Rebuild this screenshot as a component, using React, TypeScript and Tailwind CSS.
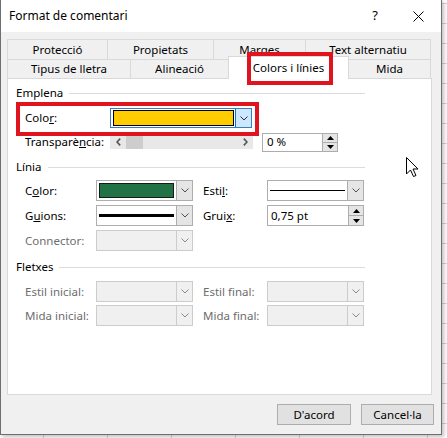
import React from "react";

const font = { fontFamily: '"Noto Sans", "Segoe UI", Arial, sans-serif' };

function Chevron({ color = "#404040" }: { color?: string }) {
  return (
    <svg width="8" height="5" viewBox="0 0 8 5">
      <polyline points="0.5,0.5 4,4 7.5,0.5" fill="none" stroke={color} strokeWidth="1" />
    </svg>
  );
}

function Spinner() {
  return (
    <div className="w-[15px] h-full flex flex-col border-l border-[#adadad] bg-[#e5e5e5]">
      <div className="flex-1 flex items-center justify-center border-b border-[#adadad]">
        <svg width="7" height="4" viewBox="0 0 7 4">
          <polygon points="0,4 3.5,0 7,4" fill="#000" />
        </svg>
      </div>
      <div className="flex-1 flex items-center justify-center">
        <svg width="7" height="4" viewBox="0 0 7 4">
          <polygon points="0,0 3.5,4 7,0" fill="#000" />
        </svg>
      </div>
    </div>
  );
}

function Dropdown({ children, disabled = false }: { children?: React.ReactNode; disabled?: boolean }) {
  return (
    <div
      className={
        "w-[97px] h-[21px] flex border " +
        (disabled ? "border-[#cccccc] bg-[#f0f0f0]" : "border-[#adadad] bg-white")
      }
    >
      <div className="flex-1 p-[2px] flex items-center">{children}</div>
      <div
        className={
          "w-[16px] flex items-center justify-center border-l " +
          (disabled ? "border-[#cccccc] bg-[#f0f0f0]" : "border-[#adadad] bg-[#e5e5e5]")
        }
      >
        <Chevron color={disabled ? "#8a8a8a" : "#505050"} />
      </div>
    </div>
  );
}

function SectionHeader({ title }: { title: string }) {
  return (
    <div className="ml-[8px] w-[349px] h-[16px] flex items-center gap-[6px]">
      <span className="leading-[16px]">{title}</span>
      <div className="flex-1 h-px bg-[#dcdcdc]" />
    </div>
  );
}

function Label({ children, w, disabled = false }: { children: React.ReactNode; w: string; disabled?: boolean }) {
  return (
    <div className={w + " leading-[16px] " + (disabled ? "text-[#6d6d6d]" : "text-black")}>{children}</div>
  );
}

function Tab({ label, w, last = false }: { label: string; w: string; last?: boolean }) {
  return (
    <div
      className={
        w +
        " h-full flex items-center justify-center border-t border-l border-[#d9d9d9] " +
        (last ? "border-r" : "")
      }
    >
      {label}
    </div>
  );
}

export default function App() {
  return (
    <div
      className="relative w-[447px] h-[438px] overflow-hidden bg-white text-[11.5px] text-black [background-image:linear-gradient(to_right,#d4d4d4_1px,transparent_1px),linear-gradient(to_bottom,#d4d4d4_1px,transparent_1px)] [background-size:64px_20px] [background-position:43px_3px]"
      style={font}
    >
      {/* dialog window */}
      <div className="w-[442px] h-[435px] flex flex-col bg-[#f0f0f0] border-l border-r border-b border-[#6f6f6f] shadow-[2px_2px_4px_rgba(0,0,0,0.25)]">
        {/* title bar */}
        <div className="h-[32px] bg-white flex items-center pl-[8px]">
          <span className="text-[12px]">Format de comentari</span>
          <div className="flex-1" />
          <span className="text-[13px] mr-[35px]">?</span>
          <svg width="11" height="11" viewBox="0 0 11 11" className="mr-[17px]">
            <line x1="0.5" y1="0.5" x2="10.5" y2="10.5" stroke="#000" strokeWidth="1" />
            <line x1="10.5" y1="0.5" x2="0.5" y2="10.5" stroke="#000" strokeWidth="1" />
          </svg>
        </div>

        {/* body */}
        <div className="flex-1 flex flex-col pl-[6px] pr-[7px] pt-[7px]">
          {/* tabs, back row */}
          <div className="h-[20px] flex w-[424px]">
            <Tab label="Protecció" w="w-[100px]" />
            <Tab label="Propietats" w="w-[106px]" />
            <Tab label="Marges" w="w-[92px]" />
            <Tab label="Text alternatiu" w="w-[126px]" last />
          </div>
          {/* tabs, front row */}
          <div className="h-[19px] flex w-[424px] relative z-10">
            <Tab label="Tipus de lletra" w="w-[123px]" />
            <Tab label="Alineació" w="w-[98px]" />
            <div className="w-[121px] h-[23px] -mt-[3px] flex items-center justify-center bg-white border-t border-l border-r border-[#d9d9d9]">
              Colors i línies
            </div>
            <div className="w-[82px] h-full flex items-center justify-center border-t border-r border-[#d9d9d9]">
              Mida
            </div>
          </div>

          {/* tab page */}
          <div className="w-[425px] h-[317px] bg-white border border-[#d9d9d9] flex flex-col pt-[6px]">
            <SectionHeader title="Emplena" />

            <div className="ml-[17px] mt-[7px] h-[20px] flex items-center">
              <Label w="w-[85px]">
                Colo<span className="underline">r</span>:
              </Label>
              <div className="w-[142px] h-[20px] flex border border-[#3d7ab8]">
                <div className="flex-1 p-[1px] pl-[2px] flex">
                  <div className="flex-1 border border-black bg-[#ffcc00]" />
                </div>
                <div className="w-[16px] flex items-center justify-center bg-[#cce8ff] border-l border-[#0078d7]">
                  <Chevron color="#303030" />
                </div>
              </div>
            </div>

            <div className="ml-[17px] mt-[4px] h-[20px] flex items-center">
              <Label w="w-[85px]">
                Transparè<span className="underline">n</span>cia:
              </Label>
              <div className="w-[143px] h-[13px] bg-[#e8e8e8] flex items-center">
                <div className="w-[16px] flex items-center justify-center">
                  <svg width="5" height="8" viewBox="0 0 5 8">
                    <polyline points="4.2,0.6 1,4 4.2,7.4" fill="none" stroke="#555" strokeWidth="1.6" />
                  </svg>
                </div>
                <div className="w-[17px] h-full bg-[#cdcdcd]" />
                <div className="flex-1" />
                <div className="w-[16px] flex items-center justify-center">
                  <svg width="5" height="8" viewBox="0 0 5 8">
                    <polyline points="0.8,0.6 4,4 0.8,7.4" fill="none" stroke="#555" strokeWidth="1.6" />
                  </svg>
                </div>
              </div>
              <div className="ml-[9px] w-[76px] h-[19px] flex border border-[#adadad] bg-white">
                <div className="flex-1 pl-[4px] flex items-center">0 %</div>
                <Spinner />
              </div>
            </div>

            <div className="mt-[7px]">
              <SectionHeader title="Línia" />
            </div>

            <div className="ml-[17px] mt-[5px] h-[21px] flex items-center">
              <Label w="w-[71px]">
                C<span className="underline">o</span>lor:
              </Label>
              <Dropdown>
                <div className="w-full h-full border border-[#1a1a1a] bg-[#217346]" />
              </Dropdown>
              <Label w="ml-[10px] w-[64px]">
                Esti<span className="underline">l</span>:
              </Label>
              <Dropdown>
                <div className="w-full h-px bg-black" />
              </Dropdown>
            </div>

            <div className="ml-[17px] mt-[4px] h-[21px] flex items-center">
              <Label w="w-[71px]">
                G<span className="underline">u</span>ions:
              </Label>
              <Dropdown>
                <div className="w-full h-[3px] bg-black" />
              </Dropdown>
              <Label w="ml-[10px] w-[64px]">
                Grui<span className="underline">x</span>:
              </Label>
              <div className="w-[97px] h-[21px] flex border border-[#adadad] bg-white">
                <div className="flex-1 pl-[3px] flex items-center">0,75 pt</div>
                <Spinner />
              </div>
            </div>

            <div className="ml-[17px] mt-[4px] h-[21px] flex items-center">
              <Label w="w-[71px]" disabled>
                Connector:
              </Label>
              <Dropdown disabled />
            </div>

            <div className="mt-[8px]">
              <SectionHeader title="Fletxes" />
            </div>

            <div className="ml-[17px] mt-[6px] h-[21px] flex items-center">
              <Label w="w-[71px]" disabled>
                Estil inicial:
              </Label>
              <Dropdown disabled />
              <Label w="ml-[10px] w-[64px]" disabled>
                Estil final:
              </Label>
              <Dropdown disabled />
            </div>

            <div className="ml-[17px] mt-[3px] h-[21px] flex items-center">
              <Label w="w-[71px]" disabled>
                Mida inicial:
              </Label>
              <Dropdown disabled />
              <Label w="ml-[10px] w-[64px]" disabled>
                Mida final:
              </Label>
              <Dropdown disabled />
            </div>
          </div>

          {/* dialog buttons */}
          <div className="mt-[9px] flex justify-end gap-[10px]">
            <button className="w-[74px] h-[21px] bg-[#e1e1e1] border border-[#adadad] flex items-center justify-center">
              D'acord
            </button>
            <button className="w-[73px] h-[21px] bg-[#e1e1e1] border border-[#adadad] flex items-center justify-center">
              Cancel·la
            </button>
          </div>
        </div>
      </div>

      {/* red highlight frames */}
      <div className="absolute left-[247px] top-[52px] w-[86px] h-[33px] border-[4px] border-[#e0141e] z-20" />
      <div className="absolute left-[16px] top-[102px] w-[243px] h-[34px] border-[4px] border-[#e0141e] z-20" />

      {/* mouse pointer */}
      <svg className="absolute left-[406px] top-[157px] z-30" width="13" height="21" viewBox="0 0 13 21">
        <polygon
          points="0.5,0.5 0.5,17 4.5,13 7.5,19.5 10,18.5 7,12 12,12"
          fill="#fff"
          stroke="#000"
          strokeWidth="1"
          strokeLinejoin="miter"
        />
      </svg>
    </div>
  );
}
